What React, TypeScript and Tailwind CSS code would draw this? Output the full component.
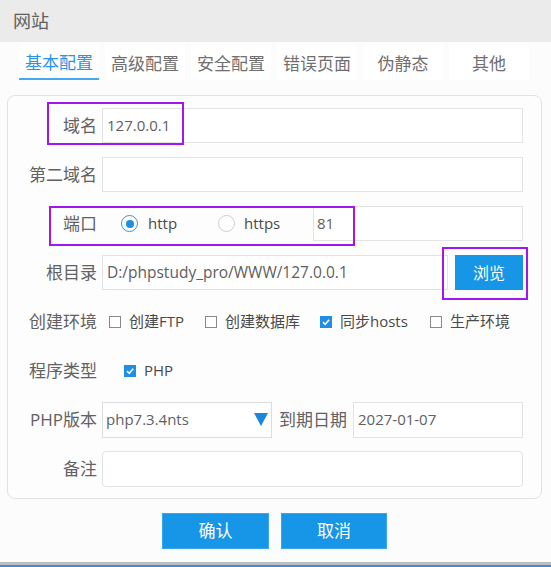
import React from "react";

const FONT = { fontFamily: '"Open Sans", "Noto Sans CJK SC", sans-serif' };

function Radio({ checked }: { checked: boolean }) {
  return checked ? (
    <span className="w-[17px] h-[17px] rounded-full border-[1.5px] border-[#2f95e8] flex items-center justify-center bg-white shrink-0">
      <span className="w-[8px] h-[8px] rounded-full bg-[#1e8ee6]" />
    </span>
  ) : (
    <span className="w-[17px] h-[17px] rounded-full border-[1.5px] border-[#cfcfcf] bg-white shrink-0" />
  );
}

function Check({ checked }: { checked: boolean }) {
  return checked ? (
    <span className="w-[12px] h-[12px] bg-[#1e8ee6] flex items-center justify-center shrink-0">
      <svg width="10" height="10" viewBox="0 0 10 10">
        <path d="M2 5.2 L4.2 7.3 L8.2 2.8" fill="none" stroke="#fff" strokeWidth="1.6" />
      </svg>
    </span>
  ) : (
    <span className="w-[12px] h-[12px] border border-[#8a8a8a] bg-white shrink-0" />
  );
}

function Label({ children }: { children: React.ReactNode }) {
  return (
    <div className="w-[89px] shrink-0 text-right text-[17px] text-[#626262] leading-none">{children}</div>
  );
}

export default function App() {
  const tabs = ["基本配置", "高级配置", "安全配置", "错误页面", "伪静态", "其他"];
  return (
    <div style={FONT} className="relative w-[551px] h-[567px] overflow-hidden bg-[#fcfcfc] flex flex-col">
      <div className="h-[42px] bg-[#ebebeb] flex items-center pl-[13px] text-[18px] text-[#606060] shrink-0">网站</div>

      <div className="mt-[4px] h-[34px] flex gap-[6px] pl-[19px] shrink-0">
        {tabs.map((t, i) => (
          <div
            key={t}
            className={
              i === 0
                ? "w-[80px] h-[34px] bg-white flex items-center justify-center pt-[2px] text-[17px] text-[#2a94e8] border-b-2 border-[#47a8f0]"
                : "w-[80px] h-[34px] bg-white flex items-center justify-center pt-[2px] text-[17px] text-[#707070]"
            }
          >
            {t}
          </div>
        ))}
      </div>

      <div className="mt-[15px] ml-[7px] w-[535px] border border-[#e2e2e2] rounded-[8px] pt-[5px] pb-[5px] pr-[18px] bg-[#fdfdfd] shrink-0">
        <div className="h-[49px] flex items-center">
          <Label>域名</Label>
          <div className="ml-[5px] flex-1 h-[35px] border border-[#e3e3e3] bg-white flex items-center pl-[4px] text-[15px] text-[#606060]">
            127.0.0.1
          </div>
        </div>
        <div className="h-[49px] flex items-center">
          <Label>第二域名</Label>
          <div className="ml-[5px] flex-1 h-[35px] border border-[#e3e3e3] bg-white" />
        </div>
        <div className="h-[49px] flex items-center">
          <Label>端口</Label>
          <div className="ml-[5px] flex items-center flex-1">
            <div className="w-[116px] pl-[19px] flex items-center">
              <Radio checked />
              <span className="ml-[10px] text-[15px] text-[#4a4a4a]">http</span>
            </div>
            <div className="w-[95px] flex items-center">
              <Radio checked={false} />
              <span className="ml-[9px] text-[15px] text-[#4a4a4a]">https</span>
            </div>
            <div className="flex-1 h-[35px] border border-[#e3e3e3] bg-white flex items-center pl-[3px] text-[15px] text-[#606060]">
              81
            </div>
          </div>
        </div>
        <div className="h-[49px] flex items-center">
          <Label>根目录</Label>
          <div className="ml-[5px] flex-1 h-[35px] border border-[#e3e3e3] bg-white flex items-center pl-[4px] text-[15.5px] text-[#606060]">
            D:/phpstudy_pro/WWW/127.0.0.1
          </div>
          <button className="ml-[7px] w-[68px] h-[35px] bg-[#1795e6] text-white text-[16px] flex items-center justify-center">
            浏览
          </button>
        </div>
        <div className="h-[49px] flex items-center">
          <Label>创建环境</Label>
          <div className="ml-[12px] flex items-center text-[15px] text-[#4a4a4a]">
            <div className="w-[96px] flex items-center">
              <Check checked={false} />
              <span className="ml-[8px]">创建FTP</span>
            </div>
            <div className="w-[115px] flex items-center">
              <Check checked={false} />
              <span className="ml-[8px]">创建数据库</span>
            </div>
            <div className="w-[110px] flex items-center">
              <Check checked />
              <span className="ml-[8px]">同步hosts</span>
            </div>
            <div className="flex items-center">
              <Check checked={false} />
              <span className="ml-[8px]">生产环境</span>
            </div>
          </div>
        </div>
        <div className="h-[49px] flex items-center">
          <Label>程序类型</Label>
          <div className="ml-[27px] flex items-center text-[15px] text-[#4a4a4a]">
            <Check checked />
            <span className="ml-[8px]">PHP</span>
          </div>
        </div>
        <div className="h-[49px] flex items-center">
          <Label>PHP版本</Label>
          <div className="ml-[5px] w-[170px] h-[36px] border border-[#dcdcdc] bg-white flex items-center pl-[3px] pr-[3px] text-[15px] text-[#606060]">
            <span className="flex-1">php7.3.4nts</span>
            <svg width="14" height="13" viewBox="0 0 14 13">
              <path d="M0 0 H14 L7 13 Z" fill="#1a86dc" />
            </svg>
          </div>
          <div className="ml-[7px] text-[17px] text-[#626262]">到期日期</div>
          <div className="ml-[6px] flex-1 h-[36px] border border-[#e3e3e3] bg-white flex items-center pl-[4px] text-[15px] text-[#606060]">
            2027-01-07
          </div>
        </div>
        <div className="h-[49px] flex items-center">
          <Label>备注</Label>
          <div className="ml-[5px] flex-1 h-[36px] border border-[#e3e3e3] rounded-[4px] bg-white" />
        </div>
      </div>

      <div className="mt-[14px] pl-[162px] flex gap-[12px] shrink-0">
        <button className="w-[107px] h-[36px] bg-[#1795e6] border border-[#3aa6ee] text-white text-[17px] flex items-center justify-center">
          确认
        </button>
        <button className="w-[106px] h-[36px] bg-[#1795e6] border border-[#3aa6ee] text-white text-[17px] flex items-center justify-center">
          取消
        </button>
      </div>

      <div className="mt-auto h-[3px] bg-[#bdbdbd] shrink-0" />
      <div className="h-[2px] bg-[#3b8fe0] shrink-0" />

      <div className="absolute left-[47px] top-[102px] w-[137px] h-[43px] border-2 border-[#a216f2]" />
      <div className="absolute left-[49px] top-[206px] w-[306px] h-[40px] border-2 border-[#a216f2]" />
      <div className="absolute left-[442px] top-[247px] w-[86px] h-[53px] border-2 border-[#a216f2]" />
    </div>
  );
}
